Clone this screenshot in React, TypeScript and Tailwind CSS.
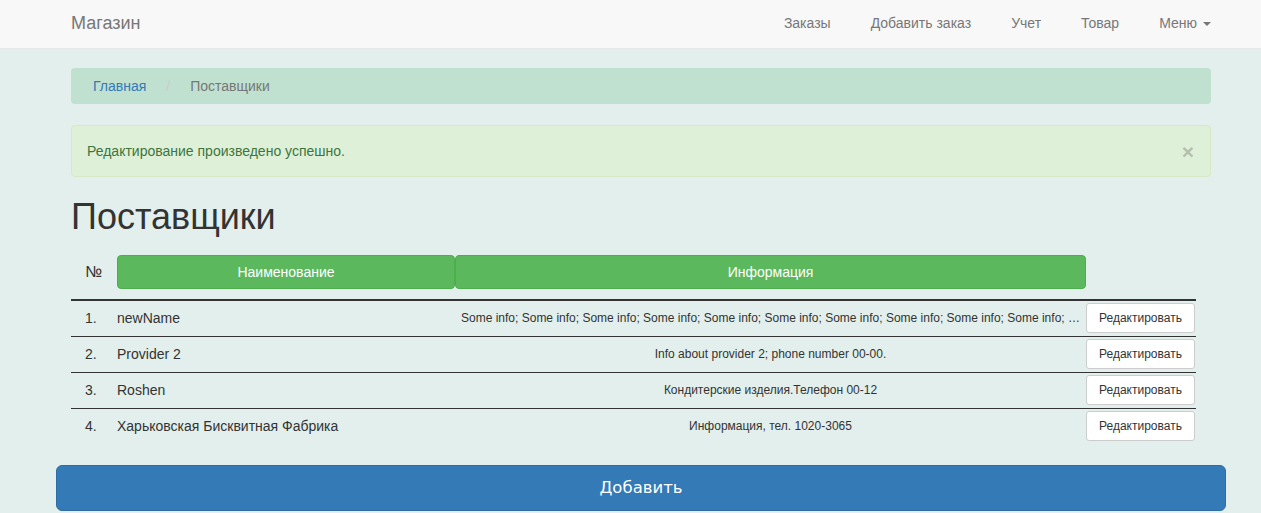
import React from 'react';

const rows = [
  { name: 'newName', info: 'Some info; Some info; Some info; Some info; Some info; Some info; Some info; Some info; Some info; Some info; Some info; Some info; Some info' },
  { name: 'Provider 2', info: 'Info about provider 2; phone number 00-00.' },
  { name: 'Roshen', info: 'Кондитерские изделия.Телефон 00-12' },
  { name: 'Харьковская Бисквитная Фабрика', info: 'Информация, тел. 1020-3065' },
];

const navItems = ['Заказы', 'Добавить заказ', 'Учет', 'Товар'];

export default function App() {
  return (
    <div className="min-h-[513px] bg-[#e2efec] font-['Liberation_Sans',Arial,sans-serif] text-[14px] text-[#333]">
      <nav className="h-[49px] border-b border-[#e7e7e7] bg-[#f8f8f8]">
        <div className="ml-[56px] flex h-[47px] w-[1170px] items-center justify-between px-[15px]">
          <span className="text-[18px] text-[#777]">Магазин</span>
          <ul className="flex items-center gap-[40px] text-[14px] text-[#777]">
            {navItems.map((item) => (
              <li key={item}>{item}</li>
            ))}
            <li className="flex items-center gap-[6px]">
              Меню
              <span className="inline-block h-0 w-0 border-x-[4px] border-t-[4px] border-x-transparent border-t-[#777]" />
            </li>
          </ul>
        </div>
      </nav>

      <div className="ml-[56px] w-[1170px] px-[15px]">
        <div className="mt-[19px] flex h-[36px] items-center rounded-[4px] bg-[#c0e0d0] px-[22px]">
          <span className="text-[#337ab7]">Главная</span>
          <span className="px-[20px] text-[#ccc]">/</span>
          <span className="text-[#777]">Поставщики</span>
        </div>

        <div className="mt-[21px] flex h-[52px] items-center justify-between rounded-[4px] border border-[#d6e9c6] bg-[#dff0d8] pl-[15px] pr-[16px] text-[#3c763d]">
          <span>Редактирование произведено успешно.</span>
          <span className="text-[21px] font-bold leading-none text-black opacity-20">×</span>
        </div>

        <h1 className="mt-[20px] text-[36px] leading-[40px] text-[#333]">Поставщики</h1>

        <table className="mt-[18px] w-[1125px] table-fixed border-collapse">
          <colgroup>
            <col className="w-[46px]" />
            <col className="w-[338px]" />
            <col className="w-[631px]" />
            <col className="w-[110px]" />
          </colgroup>
          <thead>
            <tr className="border-b-2 border-[#333]">
              <th className="pb-[10px] pl-[14px] text-left text-[16px] font-normal">№</th>
              <th className="pb-[10px]">
                <div className="flex h-[34px] items-center justify-center rounded-[4px] border border-[#4cae4c] bg-[#5cb85c] font-normal text-white">Наименование</div>
              </th>
              <th className="pb-[10px]">
                <div className="flex h-[34px] items-center justify-center rounded-[4px] border border-[#4cae4c] bg-[#5cb85c] font-normal text-white">Информация</div>
              </th>
              <th className="pb-[10px]" />
            </tr>
          </thead>
          <tbody>
            {rows.map((row, i) => (
              <tr key={row.name} className="h-[36px] border-t border-[#333] first:border-t-0">
                <td className="pl-[14px]">{i + 1}.</td>
                <td className="truncate">{row.name}</td>
                <td className="truncate px-[6px] text-center text-[12px]">{row.info}</td>
                <td className="py-[2px] pr-0">
                  <button className="h-[30px] w-[109px] rounded-[3px] border border-[#ccc] bg-white text-[12px] text-[#333]">Редактировать</button>
                </td>
              </tr>
            ))}
          </tbody>
        </table>
      </div>

      <div className="ml-[56px] mt-[21px] w-[1170px]">
        <button className="h-[46px] w-full rounded-[6px] border border-[#2e6da4] bg-[#337ab7] font-['DejaVu_Sans',sans-serif] text-[16.5px] text-white">Добавить</button>
      </div>
    </div>
  );
}
